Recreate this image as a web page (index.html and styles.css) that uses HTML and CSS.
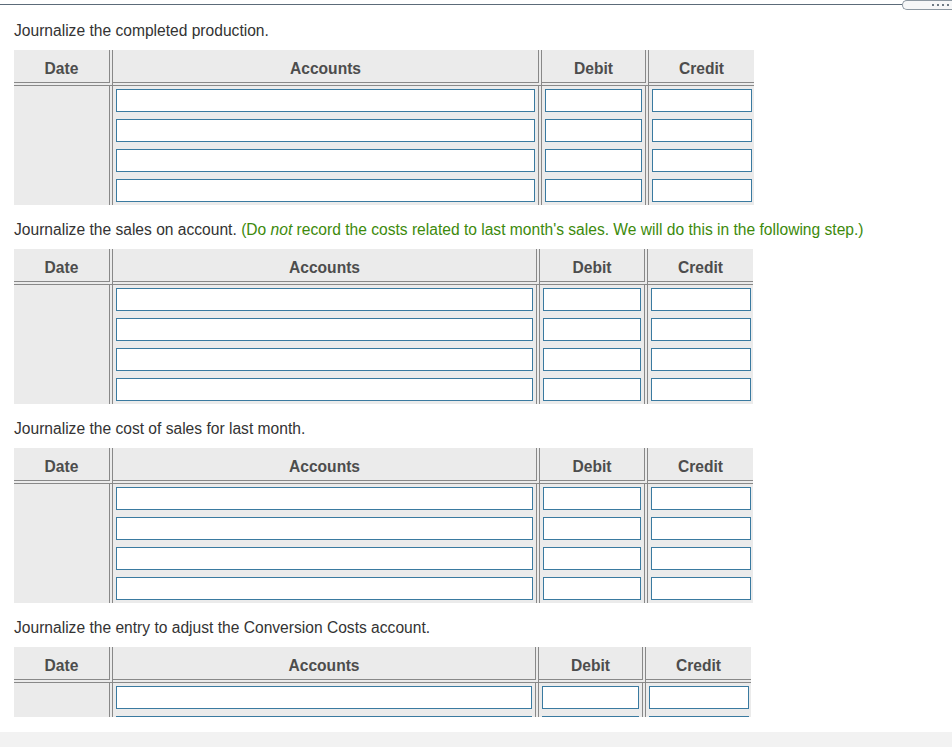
FILE: index.html
```html
<!DOCTYPE html>
<html>
<head>
<meta charset="utf-8">
<link rel="stylesheet" href="styles.css">
</head>
<body>
<div class="topbar">
  <div class="topline"></div>
  <div class="pill"><span class="dot"></span><span class="dot"></span><span class="dot"></span><span class="dot"></span></div>
</div>
<div class="content">
  <section class="entry">
    <div class="prompt">Journalize the completed production.</div>
    <div class="journal">
      <div class="hcell">Date</div>
      <div class="hcell">Accounts</div>
      <div class="hcell">Debit</div>
      <div class="hcell hlast">Credit</div>
      <div class="bcell"></div>
      <div class="bcell"><div class="inp"></div><div class="inp"></div><div class="inp"></div><div class="inp"></div></div>
      <div class="bcell"><div class="inp"></div><div class="inp"></div><div class="inp"></div><div class="inp"></div></div>
      <div class="bcell blast"><div class="inp"></div><div class="inp"></div><div class="inp"></div><div class="inp"></div></div>
    </div>
  </section>
  <section class="entry">
    <div class="prompt">Journalize the sales on account. <span class="hint">(Do <em>not</em> record the costs related to last month's sales. We will do this in the following step.)</span></div>
    <div class="journal j-b">
      <div class="hcell">Date</div>
      <div class="hcell">Accounts</div>
      <div class="hcell">Debit</div>
      <div class="hcell hlast">Credit</div>
      <div class="bcell"></div>
      <div class="bcell"><div class="inp"></div><div class="inp"></div><div class="inp"></div><div class="inp"></div></div>
      <div class="bcell"><div class="inp"></div><div class="inp"></div><div class="inp"></div><div class="inp"></div></div>
      <div class="bcell blast"><div class="inp"></div><div class="inp"></div><div class="inp"></div><div class="inp"></div></div>
    </div>
  </section>
  <section class="entry">
    <div class="prompt">Journalize the cost of sales for last month.</div>
    <div class="journal j-b">
      <div class="hcell">Date</div>
      <div class="hcell">Accounts</div>
      <div class="hcell">Debit</div>
      <div class="hcell hlast">Credit</div>
      <div class="bcell"></div>
      <div class="bcell"><div class="inp"></div><div class="inp"></div><div class="inp"></div><div class="inp"></div></div>
      <div class="bcell"><div class="inp"></div><div class="inp"></div><div class="inp"></div><div class="inp"></div></div>
      <div class="bcell blast"><div class="inp"></div><div class="inp"></div><div class="inp"></div><div class="inp"></div></div>
    </div>
  </section>
  <section class="entry">
    <div class="prompt">Journalize the entry to adjust the Conversion Costs account.</div>
    <div class="journal j-c">
      <div class="hcell">Date</div>
      <div class="hcell">Accounts</div>
      <div class="hcell">Debit</div>
      <div class="hcell hlast">Credit</div>
      <div class="bcell"></div>
      <div class="bcell"><div class="inp"></div><div class="inp"></div><div class="inp"></div><div class="inp"></div></div>
      <div class="bcell"><div class="inp"></div><div class="inp"></div><div class="inp"></div><div class="inp"></div></div>
      <div class="bcell blast"><div class="inp"></div><div class="inp"></div><div class="inp"></div><div class="inp"></div></div>
    </div>
  </section>
</div>
<div class="gap"></div>
<div class="footer"></div>
</body>
</html>
```
FILE: styles.css
```css
html, body {
  margin: 0;
  padding: 0;
  background: #ffffff;
  font-family: "Liberation Sans", Arial, sans-serif;
}

.topbar {
  display: flex;
  height: 10px;
  overflow: hidden;
}

.topline {
  flex: 1;
  height: 1px;
  margin-top: 4px;
  background: #5c6b79;
}

.pill {
  width: 46px;
  height: 8px;
  border: 1px solid #8d98a2;
  border-right: none;
  border-radius: 5px 0 0 5px;
  background: #f6f7f8;
  display: flex;
  align-items: center;
  justify-content: flex-end;
  gap: 3px;
  padding-right: 3px;
  box-sizing: content-box;
}

.dot {
  width: 2px;
  height: 2px;
  background: #6f7a84;
}

.content {
  height: 695px;
  padding: 12px 0 0 14px;
  overflow: hidden;
}

.entry {
  margin-bottom: 16px;
}

.prompt {
  font-size: 15.6px;
  line-height: 18px;
  color: #333333;
  margin-bottom: 10px;
  white-space: nowrap;
}

.hint {
  color: #3d8a0c;
}

.journal {
  display: grid;
  grid-template-columns: 99px 429px 107px 105px;
  width: max-content;
  background: #ebebeb;
}

.journal.j-b {
  grid-template-columns: 99px 427px 108px 105px;
}

.journal.j-c {
  grid-template-columns: 99px 426px 107px 105px;
}

.hcell {
  height: 36px;
  border-right: 4px double #888888;
  border-bottom: 4px double #888888;
  display: flex;
  align-items: center;
  justify-content: center;
  padding-top: 5px;
  box-sizing: border-box;
  font-size: 15.6px;
  font-weight: bold;
  color: #4d4d4d;
}

.hcell.hlast {
  border-right: none;
}

.bcell {
  border-right: 4px double #888888;
  display: flex;
  flex-direction: column;
  gap: 7px;
  padding: 3px;
}

.bcell.blast {
  border-right: none;
  padding-right: 2px;
}

.inp {
  height: 21px;
  border: 1px solid #3a7aa0;
  background: #ffffff;
}

.gap {
  height: 15px;
}

.footer {
  height: 15px;
  background: #f2f2f2;
}
```
